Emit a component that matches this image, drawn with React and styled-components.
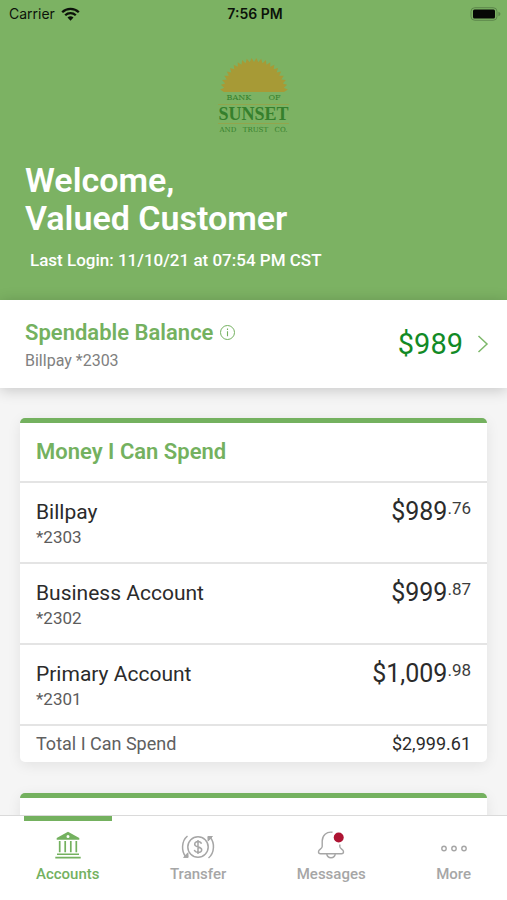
import React from "react";
import styled, { createGlobalStyle } from "styled-components";

const GlobalStyle = createGlobalStyle`
  *, *::before, *::after { box-sizing: border-box; }
  body {
    margin: 0;
    background: #f5f5f5;
    font-family: Roboto, "Liberation Sans", sans-serif;
    color: #2b2b2b;
  }
  h1, h2, p, ul { margin: 0; padding: 0; }
  ul { list-style: none; }
  button { border: 0; background: none; font: inherit; color: inherit; cursor: pointer; }
`;

const green = "#74b15f";

const Screen = styled.div`
  display: flex;
  flex-direction: column;
  height: 100vh;
  overflow: hidden;
`;

const Content = styled.div`
  flex: 1;
  min-height: 0;
  overflow: hidden;
`;

const Hero = styled.header`
  background: #7cb263;
  padding-bottom: 28px;
`;

const StatusBar = styled.div`
  display: grid;
  grid-template-columns: 1fr auto 1fr;
  align-items: center;
  height: 28px;
  padding: 0 6px 0 9px;
  font-family: Inter, "Liberation Sans", sans-serif;
  font-size: 14px;
  line-height: 20px;
  color: #0c120a;
`;

const Carrier = styled.div`
  display: flex;
  align-items: center;
  gap: 6px;
`;

const Clock = styled.time`
  font-weight: 600;
`;

const BatterySlot = styled.div`
  display: flex;
  justify-content: flex-end;
`;

const Logo = styled.div`
  display: flex;
  flex-direction: column;
  align-items: center;
  width: 68px;
  margin: 30px auto 0;
  color: #35802c;
`;

const LogoLine = styled.div`
  display: flex;
  justify-content: space-between;
  width: ${(p) => p.$width};
  font-family: "DejaVu Serif", serif;
  font-size: ${(p) => p.$size};
  line-height: 12px;
  white-space: nowrap;
`;

const LogoName = styled.div`
  border-top: 1px solid #93a44c;
  border-bottom: 1px solid #93a44c;
  font-family: "Liberation Serif", serif;
  font-weight: 700;
  font-size: 18px;
  line-height: 18px;
`;

const Greeting = styled.h1`
  margin: 25px 25px 0;
  font-size: 34px;
  line-height: 38px;
  font-weight: 600;
  color: #fff;
`;

const LastLogin = styled.p`
  margin: 11px 30px 0;
  font-size: 17px;
  line-height: 24px;
  font-weight: 500;
  color: #fff;
`;

const Balance = styled.section`
  position: relative;
  display: flex;
  align-items: center;
  justify-content: space-between;
  height: 88px;
  padding: 0 18px 0 25px;
  background: #fff;
  box-shadow: 0 2px 14px rgba(0, 0, 0, 0.2);
`;

const BalanceText = styled.div`
  padding-top: 5px;
`;

const BalanceTitle = styled.div`
  display: flex;
  align-items: center;
  gap: 6px;
`;

const Heading = styled.h2`
  font-size: 22px;
  line-height: 28px;
  font-weight: 600;
  color: ${green};
`;

const IconButton = styled.button`
  display: flex;
  padding: 0;
  color: ${green};
`;

const BalanceSource = styled.p`
  font-size: 16px;
  line-height: 28px;
  color: #808080;
`;

const BalanceLink = styled.a`
  display: flex;
  align-items: center;
  gap: 14px;
  font-size: 29px;
  line-height: 36px;
  color: #128a25;
  text-decoration: none;
`;

const Cards = styled.main`
  display: flex;
  flex-direction: column;
  gap: 31px;
  padding: 30px 20px 0;
`;

const Card = styled.section`
  min-height: 60px;
  border-top: 5px solid ${green};
  border-radius: 5px;
  background: #fff;
  box-shadow: 0 3px 14px rgba(0, 0, 0, 0.08);
`;

const CardHeader = styled.div`
  padding: 15px 16px;
`;

const AccountRow = styled.li`
  display: flex;
  justify-content: space-between;
  height: 81px;
  padding: 15px 16px 0;
  border-top: 2px solid #e4e4e4;
`;

const AccountName = styled.p`
  font-size: 21px;
  line-height: 28px;
`;

const AccountNumber = styled.p`
  font-size: 17px;
  line-height: 22px;
  color: #5c5c5c;
`;

const Amount = styled.p`
  display: flex;
  align-items: flex-start;
  font-size: 25px;
  line-height: 28px;
`;

const Cents = styled.span`
  font-size: 17px;
  line-height: 21px;
  color: #3c3c3c;
`;

const TotalRow = styled.div`
  display: flex;
  justify-content: space-between;
  padding: 4px 16px;
  border-top: 2px solid #e4e4e4;
  font-size: 18px;
  line-height: 28px;
`;

const TotalLabel = styled.span`
  color: #606060;
`;

const TabBar = styled.nav`
  position: relative;
  display: flex;
  justify-content: space-between;
  align-items: flex-start;
  height: 85px;
  padding: 0 24px;
  border-top: 1px solid #dadada;
  background: #fff;
`;

const Tab = styled.button`
  display: flex;
  flex-direction: column;
  align-items: center;
  gap: 5px;
  padding: 10px 12px 0;
  border-top: 5px solid ${(p) => (p.$active ? green : "transparent")};
  font-size: 15px;
  line-height: 20px;
  font-weight: 500;
  color: ${(p) => (p.$active ? green : "#a6a6a6")};
`;

const spikes = 44;
const sunPoints = Array.from({ length: spikes + 1 }, (_, i) => {
  const a = Math.PI - (i * Math.PI) / spikes;
  const r = i % 2 ? 34 : 30;
  return `${(34 + r * Math.cos(a)).toFixed(1)},${(34 - r * Math.sin(a)).toFixed(1)}`;
}).join(" ");

const Sun = () => (
  <svg width="68" height="34" viewBox="0 0 68 34" aria-hidden="true">
    <polygon points={sunPoints} fill="#a79a36" />
  </svg>
);

const Wifi = () => (
  <svg width="19" height="14" viewBox="0 0 19 14" aria-hidden="true">
    <g fill="none" stroke="#0c120a" strokeWidth="2.3">
      <path d="M1.2 5.2a11.8 11.8 0 0 1 16.6 0" />
      <path d="M4.2 8.3a7.6 7.6 0 0 1 10.6 0" />
    </g>
    <path d="M6.5 10.6a4.3 4.3 0 0 1 6 0L9.5 13.7z" fill="#0c120a" />
  </svg>
);

const Battery = () => (
  <svg width="31" height="14" viewBox="0 0 31 14" aria-hidden="true">
    <rect x="1" y=".7" width="26" height="12.6" rx="3.8" fill="none" stroke="#5d874c" strokeWidth="1" />
    <rect x="3" y="2.5" width="22" height="9" rx="1.5" fill="#060806" />
    <path d="M28.4 4.8v4.4c1.5-.5 2-1.4 2-2.2s-.5-1.7-2-2.2z" fill="#5d874c" />
  </svg>
);

const Info = () => (
  <svg width="17" height="17" viewBox="0 0 17 17" fill="none" stroke="currentColor" aria-hidden="true">
    <circle cx="8.5" cy="8.5" r="7" strokeWidth="1" />
    <path d="M8.5 7.2v5M8.5 4.6v1.4" strokeWidth="1.1" />
  </svg>
);

const Chevron = () => (
  <svg width="12" height="20" viewBox="0 0 12 20" fill="none" stroke="#7db86a" strokeWidth="1.5" aria-hidden="true">
    <path d="M1.500 2 10 10l-8.500 8" />
  </svg>
);

const Bank = () => (
  <svg width="26" height="28" viewBox="0 0 26 28" fill="none" stroke="currentColor" aria-hidden="true">
    <path fillRule="evenodd" fill="currentColor" stroke="none" d="M13 .8 24.300 7V8.700H1.700V7zM13 3.900a1.500 1.500 0 1 0 0 3 1.500 1.500 0 0 0 0-3z" />
    <path d="M4.700 10v11.200M10.200 10v11.200M15.800 10v11.200M21.300 10v11.200" strokeWidth="1.700" />
    <path d="M2 23.200h22M.3 26.600h25.400" strokeWidth="1.600" />
  </svg>
);

const Transfer = () => (
  <svg width="34" height="28" viewBox="0 0 34 28" fill="none" stroke="currentColor" strokeWidth="1.500" aria-hidden="true">
    <circle cx="17" cy="16" r="10.200" />
    <path d="M20.500 12.800c-.5-1.400-1.700-2.200-3.500-2.200-2 0-3.300 1-3.300 2.600 0 3.700 7 1.800 7 5.500 0 1.700-1.500 2.700-3.600 2.700-2 0-3.300-.9-3.800-2.500M17 8.900v14.200" />
    <path d="M6.500 5C.2 10 .3 20.500 4.700 25.500M27.500 27C33.800 22 33.700 11.500 29.300 6.500" />
    <path d="M2.600 26.400h4.500l-.2-4.600zM31.400 5.500h-4.500l.2 4.600z" fill="currentColor" strokeWidth="1" />
  </svg>
);

const Bell = () => (
  <svg width="28" height="28" viewBox="0 0 28 28" fill="none" stroke="#a6a6a6" strokeWidth="1.400" aria-hidden="true">
    <path d="M15.500 1.300C9.500.3 5.200 4.600 5.200 10v5.500c0 2.500-3.700 2.700-3.700 5.200 0 1.200.8 2 2 2h21c1.200 0 2-.8 2-2 0-2.500-3.700-2.700-3.700-5.200V13.500" />
    <path d="M9.700 22.700c.3 2.600 2 4.100 4.300 4.100s4-1.500 4.300-4.100" />
    <circle cx="21.700" cy="6.500" r="5" fill="#ae1433" stroke="none" />
  </svg>
);

const More = () => (
  <svg width="28" height="28" viewBox="0 0 28 28" fill="none" stroke="currentColor" strokeWidth="1.400" aria-hidden="true">
    <circle cx="4" cy="17.500" r="2.200" />
    <circle cx="14" cy="17.500" r="2.200" />
    <circle cx="24" cy="17.500" r="2.200" />
  </svg>
);

const accounts = [
  { name: "Billpay", number: "*2303", dollars: "$989", cents: ".76" },
  { name: "Business Account", number: "*2302", dollars: "$999", cents: ".87" },
  { name: "Primary Account", number: "*2301", dollars: "$1,009", cents: ".98" },
];

const tabs = [
  { label: "Accounts", Icon: Bank, active: true },
  { label: "Transfer", Icon: Transfer },
  { label: "Messages", Icon: Bell },
  { label: "More", Icon: More },
];

export default function App() {
  return (
    <Screen>
      <GlobalStyle />
      <Content>
        <Hero>
          <StatusBar>
            <Carrier>Carrier <Wifi /></Carrier>
            <Clock>7:56 PM</Clock>
            <BatterySlot><Battery /></BatterySlot>
          </StatusBar>
          <Logo>
            <Sun />
            <LogoLine $width="54px" $size="8px"><span>BANK</span> <span>OF</span></LogoLine>
            <LogoName>SUNSET</LogoName>
            <LogoLine $width="68px" $size="7px"><span>AND</span> <span>TRUST</span> <span>CO.</span></LogoLine>
          </Logo>
          <Greeting>Welcome,<br />Valued Customer</Greeting>
          <LastLogin>Last Login: 11/10/21 at 07:54 PM CST</LastLogin>
        </Hero>

        <Balance>
          <BalanceText>
            <BalanceTitle>
              <Heading>Spendable Balance</Heading>
              <IconButton aria-label="About spendable balance"><Info /></IconButton>
            </BalanceTitle>
            <BalanceSource>Billpay *2303</BalanceSource>
          </BalanceText>
          <BalanceLink href="#balance">$989 <Chevron /></BalanceLink>
        </Balance>

        <Cards>
          <Card>
            <CardHeader><Heading>Money I Can Spend</Heading></CardHeader>
            <ul>
              {accounts.map((a) => (
                <AccountRow key={a.number}>
                  <div>
                    <AccountName>{a.name}</AccountName>
                    <AccountNumber>{a.number}</AccountNumber>
                  </div>
                  <Amount>{a.dollars}<Cents>{a.cents}</Cents></Amount>
                </AccountRow>
              ))}
            </ul>
            <TotalRow>
              <TotalLabel>Total I Can Spend</TotalLabel>
              <span>$2,999.61</span>
            </TotalRow>
          </Card>
          <Card />
        </Cards>
      </Content>

      <TabBar>
        {tabs.map(({ label, Icon, active }) => (
          <Tab key={label} $active={active} aria-current={active ? "page" : undefined}>
            <Icon />
            {label}
          </Tab>
        ))}
      </TabBar>
    </Screen>
  );
}
